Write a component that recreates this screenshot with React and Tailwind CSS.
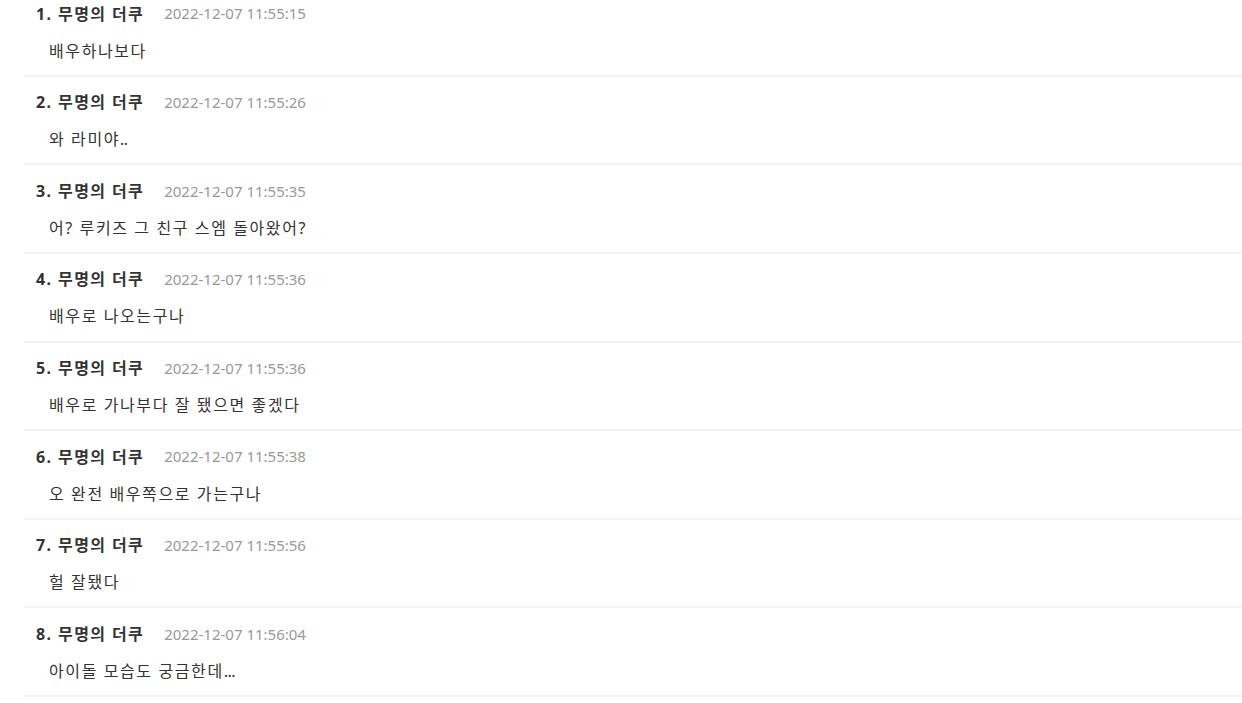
const comments = [
  { id: 1, time: "2022-12-07 11:55:15", text: "배우하나보다" },
  { id: 2, time: "2022-12-07 11:55:26", text: "와 라미야.." },
  { id: 3, time: "2022-12-07 11:55:35", text: "어? 루키즈 그 친구 스엠 돌아왔어?" },
  { id: 4, time: "2022-12-07 11:55:36", text: "배우로 나오는구나" },
  { id: 5, time: "2022-12-07 11:55:36", text: "배우로 가나부다 잘 됐으면 좋겠다" },
  { id: 6, time: "2022-12-07 11:55:38", text: "오 완전 배우쪽으로 가는구나" },
  { id: 7, time: "2022-12-07 11:55:56", text: "헐 잘됐다" },
  { id: 8, time: "2022-12-07 11:56:04", text: "아이돌 모습도 궁금한데..." },
];

// trailing dots in the reference are tight, so only the words get tracking
const splitDots = (s) => {
  const m = s.match(/^(.*?)(\.*)$/);
  return [m[1], m[2]];
};

const CommentRow = ({ c }) => {
  const [words, dots] = splitDots(c.text);
  return (
    <li className="border-b-2 border-[#f3f3f3] pt-[13.5px] pb-[12.14px]">
      <div className="flex items-center h-6 pl-3">
        <span className="text-[16px] font-bold text-[#333] tracking-[1.4px]">
          {c.id}. 무명의 더쿠
        </span>
        <span className="ml-[20px] text-[15px] text-[#999]">{c.time}</span>
      </div>
      <p className="mt-[13px] h-6 pl-[25px] text-[16px] leading-6 text-[#333]">
        <span className="tracking-[1.6px]">{words}</span>
        {dots && <span className="tracking-[-0.5px]">{dots}</span>}
      </p>
    </li>
  );
};

export default function App() {
  return (
    <div
      className="bg-white min-h-screen overflow-hidden pl-6"
      style={{ fontFamily: '"Noto Sans", "Noto Sans CJK KR", sans-serif' }}
    >
      <ul className="-mt-[12px]">
        {comments.map((c) => (
          <CommentRow key={c.id} c={c} />
        ))}
      </ul>
    </div>
  );
}
